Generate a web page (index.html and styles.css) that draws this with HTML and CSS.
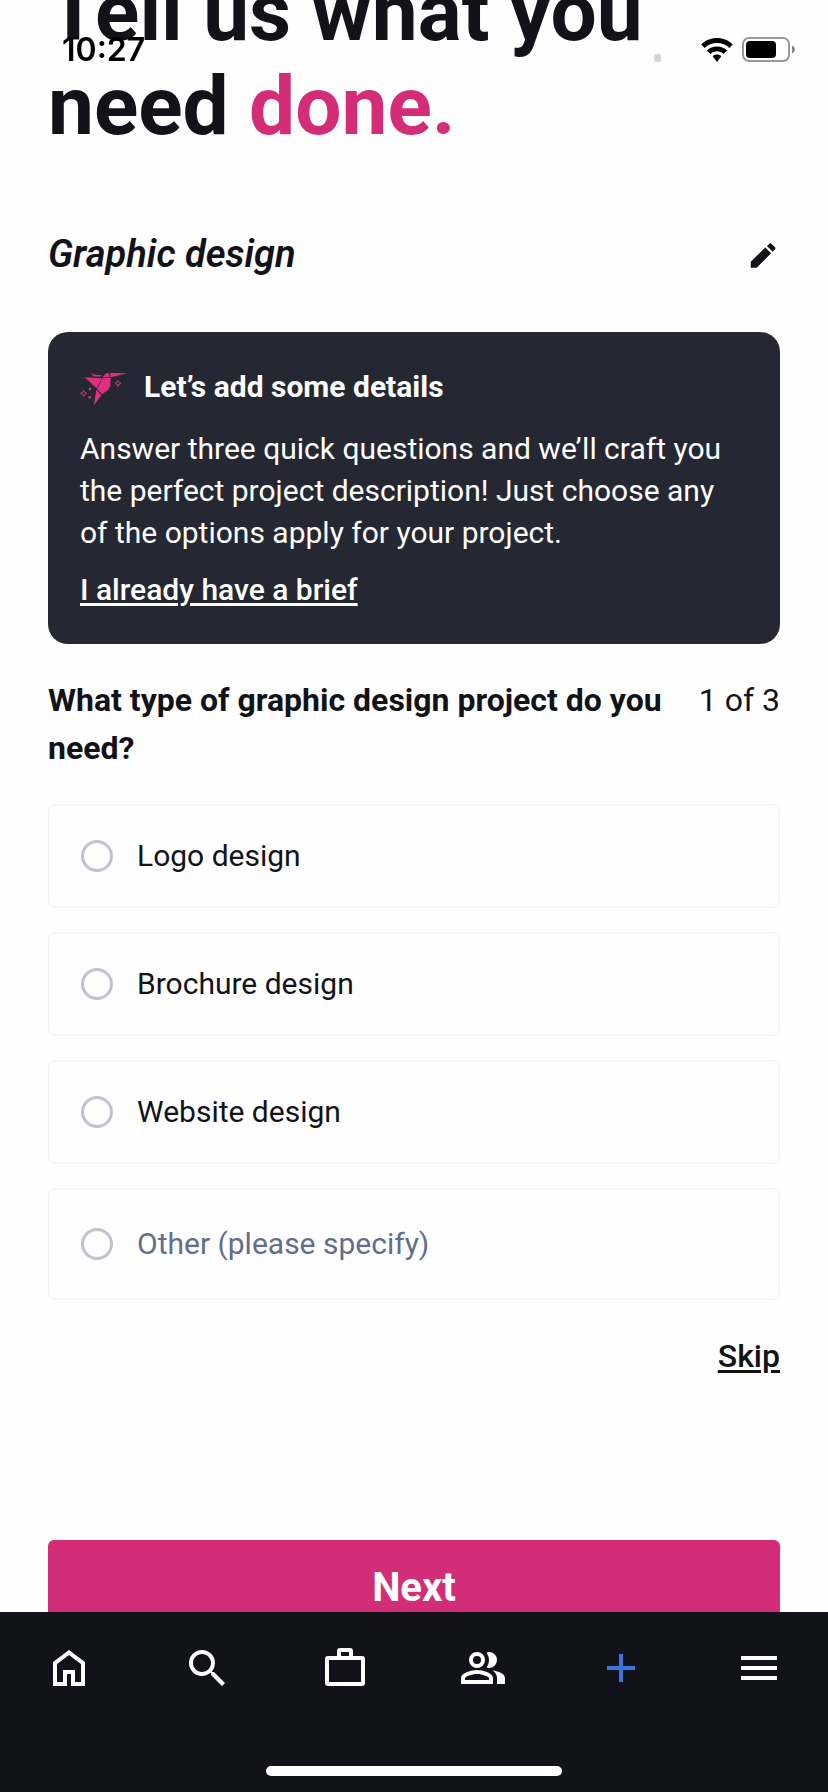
FILE: index.html
```html
<!DOCTYPE html>
<html lang="en">
<head>
    <meta charset="UTF-8">
    <meta name="viewport" content="width=device-width, initial-scale=1">
    <title>Post a project</title>
    <link rel="stylesheet" href="styles.css">
</head>
<body>

<!-- status bar -->
<div class="status">
    <span class="status-time">10:27</span>
    <div class="status-icons">
        <span class="status-signal"></span>
        <svg class="status-wifi" width="32" height="24" viewBox="0 0 32 24" aria-hidden="true">
            <path d="M16 0C22.200 0 27.800 2.400 31.700 6.400L28.300 9.900C25.100 6.700 20.800 4.900 16 4.900S6.900 6.700 3.700 9.900L.3 6.400C4.200 2.400 9.800 0 16 0z"/>
            <path d="M16 8.400C19.900 8.400 23.500 9.900 26.100 12.400L22.600 15.900C20.900 14.200 18.600 13.200 16 13.200S11.100 14.200 9.400 15.900L5.900 12.400C8.500 9.900 12.100 8.400 16 8.400z"/>
            <path d="M16 16.600C17.700 16.600 19.200 17.300 20.300 18.300L16 24L11.700 18.300C12.800 17.300 14.300 16.600 16 16.600z"/>
        </svg>
        <svg class="status-battery" width="54" height="26" viewBox="0 0 54 26" aria-hidden="true">
            <rect x="1" y="1" width="46" height="23" rx="6" fill="#fff" stroke="#999" stroke-width="2"/>
            <rect x="4" y="4" width="30" height="17" rx="4"/>
            <path d="M50 8.500C52 9.500 53 11 53 12.500S52 15.500 50 16.500z" fill="#888"/>
        </svg>
    </div>
</div>

<main class="wrap">
    <h1 class="title">Tell us what you need <span>done.</span></h1>

    <div class="category">
        <h2>Graphic design</h2>
        <button type="button" class="btn-edit" aria-label="Edit category">
            <svg width="36" height="36" viewBox="-1 -1 24 24" aria-hidden="true">
                <path d="M3.500 16.200V20.200h3.900L17.100 10.500 13.200 6.600zM19.700 7.900c.4-.4.4-1 0-1.400L17.300 4.100c-.4-.4-1-.4-1.400 0L14.300 5.700l3.800 3.800z"/>
            </svg>
        </button>
    </div>

    <section class="card">
        <div class="card-head">
            <svg class="bird" width="48" height="36" viewBox="60 65 144 108" aria-hidden="true">
                <path d="M149 71L201 72L153 84z"/>
                <path d="M95 71L105 76L125 78L120 82L99 81z"/>
                <path d="M74 84L126 87L110 117z"/>
                <path d="M127 84L139 72L146 72L150 84z"/>
                <path d="M128 86L152 86L151 110L145 121L126 135L111 119z"/>
                <path d="M109 121L124 137L102 168z"/>
                <path class="spark" d="M71 123L74 129L80 132L74 135L71 141L68 135L62 132L68 129z"/>
                <path class="spark" d="M174 93L177 99L183 102L177 105L174 111L171 105L165 102L171 99z"/>
                <circle cx="90" cy="119" r="4"/>
                <circle cx="89" cy="144" r="4"/>
            </svg>
            <h3>Let’s add some details</h3>
        </div>
        <p>Answer three quick questions and we’ll craft you the perfect project description! Just choose any of the options apply for your project.</p>
        <a href="#brief">I already have a brief</a>
    </section>

    <form>
        <fieldset class="question">
            <legend class="question-head">
                <span class="question-text">What type of graphic design project do you need?</span>
                <span class="question-step">1 of 3</span>
            </legend>
            <label class="option"><input type="radio" name="type" value="logo">Logo design</label>
            <label class="option"><input type="radio" name="type" value="brochure">Brochure design</label>
            <label class="option"><input type="radio" name="type" value="website">Website design</label>
            <label class="option option-other"><input type="radio" name="type" value="other">Other (please specify)</label>
        </fieldset>
        <a class="skip" href="#skip">Skip</a>
        <button type="submit" class="btn-next">Next</button>
    </form>
</main>

<!-- bottom tabs -->
<nav class="tabs">
    <ul>
        <li><a href="#home" aria-label="Home">
            <svg width="48" height="48" viewBox="0 0 24 24" aria-hidden="true">
                <path d="M12 3L4 9v12h7v-6h2v6h7V9zM12 5.500L18 10v9h-3v-6H9v6H6v-9z" fill-rule="evenodd"/>
            </svg>
        </a></li>
        <li><a href="#search" aria-label="Search">
            <svg width="48" height="48" viewBox="0 0 24 24" aria-hidden="true">
                <path d="M15.500 14h-.79l-.28-.27A6.471 6.471 0 0 0 16 9.500 6.500 6.500 0 1 0 9.500 16c1.610 0 3.090-.59 4.230-1.570l.27.28v.79l5.500 5.500L21 19.500zm-6 0C7.010 14 5 11.990 5 9.500S7.010 5 9.500 5 14 7.010 14 9.500 11.990 14 9.500 14z"/>
            </svg>
        </a></li>
        <li><a href="#projects" aria-label="Projects">
            <svg width="48" height="48" viewBox="0 0 24 24" aria-hidden="true">
                <path d="M20.500 6H16V3.500A1.500 1.500 0 0 0 14.500 2h-5A1.500 1.500 0 0 0 8 3.500V6H3.500A1.500 1.500 0 0 0 2 7.500v12A1.500 1.500 0 0 0 3.500 21h17a1.500 1.500 0 0 0 1.500-1.500v-12A1.500 1.500 0 0 0 20.500 6zM10 4h4v2h-4zM20 19H4V8h16z" fill-rule="evenodd"/>
            </svg>
        </a></li>
        <li><a href="#people" aria-label="People">
            <svg width="48" height="48" viewBox="0 0 24 24" aria-hidden="true">
                <path d="M9 4a4 4 0 1 0 0 8 4 4 0 0 0 0-8zm0 2a2 2 0 1 1 0 4 2 2 0 0 1 0-4zM9 13c-2.670 0-8 1.340-8 4v3h16v-3c0-2.660-5.330-4-8-4zm6 5H3v-.99C3.200 16.290 6.300 15 9 15s5.800 1.290 6 2z" fill-rule="evenodd"/>
                <path d="M13.760 11.660C14.540 10.640 15 9.370 15 8s-.46-2.640-1.240-3.660C14.150 4.130 14.570 4 15 4a4 4 0 0 1 0 8c-.43 0-.85-.13-1.240-.34zM16.670 13.130C18.040 14.060 19 15.320 19 17v3h4v-3c0-2.180-3.580-3.470-6.330-3.870z"/>
            </svg>
        </a></li>
        <li><a href="#post" class="tab-post" aria-label="Post a project">
            <svg width="48" height="48" viewBox="0 0 24 24" aria-hidden="true">
                <path d="M19 13h-6v6h-2v-6H5v-2h6V5h2v6h6z"/>
            </svg>
        </a></li>
        <li><a href="#menu" aria-label="Menu">
            <svg width="48" height="48" viewBox="0 0 24 24" aria-hidden="true">
                <path d="M3 18h18v-2H3zM3 13h18v-2H3zM3 6v2h18V6z"/>
            </svg>
        </a></li>
    </ul>
    <div class="home-bar"></div>
</nav>

</body>
</html>
```

FILE: styles.css
```css
* {
    box-sizing: border-box;
    padding: 0;
    margin: 0;
}

body {
    height: 100vh;
    overflow: hidden;
    background: #fefefe;
    color: #121319;
    font: 30px/48px Roboto, sans-serif;
}

/* status bar */
.status {
    position: fixed;
    top: 0;
    left: 0;
    right: 0;
    z-index: 2;
    height: 100px;
    padding: 0 32px 0 62px;
    display: flex;
    align-items: center;
    justify-content: space-between;
    color: #000;
}

.status-time {
    font: 600 32px/36px Inter, sans-serif;
}

.status-icons {
    display: flex;
    align-items: center;
}

.status-signal {
    width: 7px;
    height: 8px;
    margin: 16px 40px 0 0;
    border-radius: 2px;
    background: #d4d4d4;
}

.status-wifi {
    margin-right: 9px;
}

/* the page is scrolled a little, the top of the title is cut */
.wrap {
    margin-top: -35px;
    padding: 0 48px;
}

.title {
    font-size: 82px;
    line-height: 94px;
    font-weight: 700;
}

.title span {
    color: #d42d78;
}

.category {
    display: flex;
    align-items: center;
    justify-content: space-between;
    margin: 77px 0 54px;
}

.category h2 {
    font-size: 38px;
    line-height: 48px;
    font-weight: 600;
    font-style: italic;
}

.btn-edit {
    width: 36px;
    height: 36px;
    border: 0;
    background: none;
    cursor: pointer;
}

.btn-edit svg {
    display: block;
    fill: #121319;
}

.card {
    padding: 32px;
    border-radius: 20px;
    background: #252833;
    color: #fff;
}

.card-head {
    display: flex;
    align-items: center;
    gap: 16px;
    margin-bottom: 18px;
}

.card-head h3 {
    font-size: 30px;
    line-height: 46px;
    font-weight: 700;
}

.bird {
    fill: #dd3180;
    margin-top: 4px;
}

.bird .spark {
    fill: none;
    stroke: #dd3180;
    stroke-width: 3px;
}

.card p {
    font-size: 30px;
    line-height: 42px;
    margin-bottom: 14px;
}

.card a {
    display: block;
    width: fit-content;
    line-height: 44px;
    color: #fff;
    font-weight: 500;
    text-underline-offset: 3px;
}

.question {
    border: 0;
    min-width: 0;
    margin-top: 32px;
}

.question-head {
    width: 100%;
    display: flex;
    gap: 32px;
    justify-content: space-between;
    margin-bottom: 32px;
    font-size: 32px;
}

.question-text {
    font-weight: 700;
}

.question-step {
    white-space: nowrap;
}

.option {
    display: flex;
    align-items: center;
    gap: 24px;
    min-height: 104px;
    padding: 0 32px;
    margin-bottom: 24px;
    border: 1px solid #efeff1;
    border-radius: 8px;
    cursor: pointer;
}

.option input {
    appearance: none;
    width: 32px;
    height: 32px;
    border: 3px solid #bec3ce;
    border-radius: 50%;
}

.option input:checked {
    border: 10px solid #d42d78;
}

.option-other {
    min-height: 112px;
    margin-bottom: 0;
    color: #626e8b;
}

.skip {
    display: block;
    width: fit-content;
    margin: 32px 0 0 auto;
    color: #121319;
    font-size: 32px;
    font-weight: 500;
    text-underline-offset: 3px;
}

.btn-next {
    display: block;
    width: 100%;
    height: 96px;
    margin-top: 160px;
    border: 0;
    border-radius: 6px;
    background: #d42d78;
    color: #fff;
    font: 700 40px/48px Roboto, sans-serif;
    cursor: pointer;
}

/* bottom tabs */
.tabs {
    position: fixed;
    left: 0;
    right: 0;
    bottom: 0;
    z-index: 2;
    height: 180px;
    padding: 32px 0 16px;
    display: flex;
    flex-direction: column;
    justify-content: space-between;
    background: #12121a;
}

.tabs ul {
    display: flex;
    list-style: none;
}

.tabs li {
    flex: 1;
}

.tabs a {
    display: flex;
    justify-content: center;
}

.tabs svg {
    fill: #fff;
}

.tabs .tab-post svg {
    fill: #3d73da;
}

.home-bar {
    width: 296px;
    height: 10px;
    margin: 0 auto;
    border-radius: 5px;
    background: #fff;
}
```
